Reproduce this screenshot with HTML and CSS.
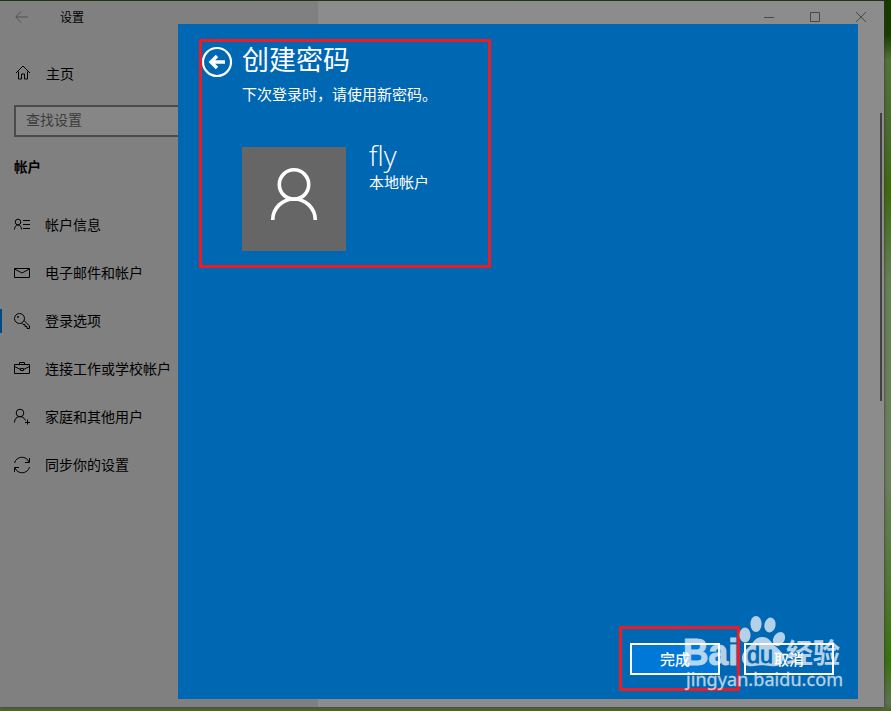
FILE: index.html
```html
<!DOCTYPE html>
<html lang="zh-CN">

<head>
    <meta charset="UTF-8">
    <title>设置</title>
    <link rel="stylesheet" href="styles.css">
</head>

<body>
    <div class="window">
        <div class="sidebar">
            <div class="title-bar">
                <svg class="back" width="14" height="12" viewBox="0 0 14 12"><path d="M6 .5.8 6 6 11.5M1 6h12"/></svg>
                <span>设置</span>
            </div>
            <div class="home">
                <svg width="16" height="16" viewBox="0 0 16 16"><path d="M1 8 8 1l7 7M3.500 6.500v7.500h3v-5h3v5h3V6.500"/></svg>
                <span>主页</span>
            </div>
            <div class="search">查找设置</div>
            <div class="group">帐户</div>
            <ul class="menu">
                <li>
                    <svg width="18" height="18" viewBox="0 0 18 18"><circle cx="5" cy="6" r="2.800"/><path d="M1.500 13.500c0-6 7-6 7 0M10 4.500h7M10 8.500h7M10 12.500h7"/></svg>
                    <span>帐户信息</span>
                </li>
                <li>
                    <svg width="18" height="18" viewBox="0 0 18 18"><path d="M1.500 4.500h15v9h-15zM1.500 5 9 9l7.500-4"/></svg>
                    <span>电子邮件和帐户</span>
                </li>
                <li class="active">
                    <svg width="18" height="18" viewBox="0 0 18 18"><circle cx="6.500" cy="6.500" r="5"/><circle cx="5" cy="5" r=".6"/><path d="m11 8.500 5.500 5.500v2.500H14v-2h-2v-2h-2L8.500 11"/></svg>
                    <span>登录选项</span>
                </li>
                <li>
                    <svg width="18" height="18" viewBox="0 0 18 18"><path d="M1.500 4.500h15v9h-15zM6.500 4.500v-2h5v2M1.500 6.500l6 3m3 0 6-3M7.500 8.500h3v2h-3z"/></svg>
                    <span>连接工作或学校帐户</span>
                </li>
                <li>
                    <svg width="18" height="18" viewBox="0 0 18 18"><circle cx="7" cy="5" r="3.800"/><path d="M1.500 14.500c0-7.500 9-7.500 11-2M14.500 11.500v5M12 14.500h5"/></svg>
                    <span>家庭和其他用户</span>
                </li>
                <li>
                    <svg width="18" height="18" viewBox="0 0 18 18"><path d="M1.500 7C3.500-.5 13.500-.5 16 6M16.500 2v4.500H12M16.500 11C14.500 18.500 4.500 18.500 2 12M1.500 16v-4.500H6"/></svg>
                    <span>同步你的设置</span>
                </li>
            </ul>
        </div>
        <div class="content">
            <svg class="controls" width="104" height="12" viewBox="0 0 104 12"><path d="M1 6.500h10M47.500 1.500h9v9h-9zM93 1l10 10M103 1 93 11"/></svg>
            <div class="scrollbar"></div>
        </div>
    </div>

    <div class="dialog">
        <div class="header">
            <svg class="dialog-back" width="32" height="32" viewBox="0 0 32 32"><circle cx="16" cy="16" r="14"/><path d="M24 16H10M16 10l-6 6 6 6"/></svg>
            <div class="heading">
                <h1>创建密码</h1>
                <p>下次登录时，请使用新密码。</p>
            </div>
        </div>
        <div class="account">
            <div class="avatar">
                <svg width="104" height="104" viewBox="0 0 104 104"><circle cx="52" cy="37.500" r="14.700"/><path d="M30.700 73a21.300 21 0 0 1 42.600 0"/></svg>
            </div>
            <div class="user">
                <div class="name">fly</div>
                <div class="type">本地帐户</div>
            </div>
        </div>
        <div class="buttons">
            <div class="btn primary">完成</div>
            <div class="btn">取消</div>
        </div>
    </div>

    <!-- 标注框 -->
    <div class="mark mark-top"></div>
    <div class="mark mark-finish"></div>

    <!-- 水印 -->
    <svg class="watermark" width="170" height="85" viewBox="0 0 170 85">
        <ellipse cx="65" cy="25" rx="5.600" ry="7.500"/>
        <ellipse cx="76" cy="14" rx="5.600" ry="8"/>
        <ellipse cx="90" cy="15" rx="5.600" ry="7.500" transform="rotate(12 90 15)"/>
        <ellipse cx="99" cy="29" rx="5.600" ry="7.500" transform="rotate(30 99 29)"/>
        <path d="M82 27c7 0 9 5 13 9 5 4 9 8 8 14-1 6-8 7-13 6-6-1-10-1-16 0-6 1-12-1-12-8 0-6 5-9 9-13 3-4 5-8 11-8z"/>
        <text class="du" x="67" y="53" textLength="26" lengthAdjust="spacingAndGlyphs">du</text>
        <text class="brand" x="3" y="55" textLength="55" lengthAdjust="spacingAndGlyphs">Bai</text>
        <text class="brand-cn" x="106" y="53" textLength="54">经验</text>
        <text class="site" x="6" y="76" textLength="157">jingyan.baidu.com</text>
    </svg>
</body>

</html>
```

FILE: styles.css
```css
* {
    margin: 0;
    padding: 0;
    box-sizing: border-box;
}

body {
    position: relative;
    width: 891px;
    height: 711px;
    padding-top: 1px;
    overflow: hidden;
    font-family: "Noto Sans", "Noto Sans CJK SC", sans-serif;
    font-size: 14px;
    color: #000;
    background: linear-gradient(#183800 0, #183c02 35px, #53733b 60px, #4b6b33 130px, #3f6810 190px, #668056 280px, #6c805f 480px, #4f7530 600px, #38720d 660px, #607255 703px, #4e642e 711px);
}

svg {
    fill: none;
    stroke: #000;
    stroke-width: 1;
    flex-shrink: 0;
}

.window {
    display: flex;
    width: 884px;
    height: 706px;
    background-color: #8c8c8c;
    box-shadow: 0 0 3px #333;
}

.sidebar {
    width: 318px;
    background-color: #808080;
}

.title-bar {
    display: flex;
    align-items: center;
    height: 32px;
    padding-left: 15px;
    font-size: 12px;
}

.title-bar span {
    margin-left: 31px;
}

.back {
    stroke: #505050;
}

.home {
    display: flex;
    align-items: center;
    height: 48px;
    margin-top: 16px;
    padding-left: 15px;
}

.home span {
    margin-left: 15px;
}

.search {
    width: 290px;
    height: 32px;
    margin: 8px 0 0 14px;
    padding-left: 10px;
    line-height: 26px;
    border: 2px solid #4b4b4b;
    background-color: #868686;
    color: #3c3c3c;
}

.group {
    margin: 20px 0 0 14px;
    font-size: 13.5px;
    line-height: 20px;
    font-weight: bold;
}

.menu {
    margin-top: 24px;
    list-style: none;
}

.menu li {
    display: flex;
    align-items: center;
    height: 48px;
    padding-left: 13px;
}

.menu span {
    margin-left: 14px;
    padding-bottom: 2px;
}

.menu .active {
    background: linear-gradient(#004a85, #004a85) 0 50% / 2px 24px no-repeat;
}

.content {
    flex: 1;
    display: flex;
    flex-direction: column;
    align-items: flex-end;
}

.controls {
    margin: 10px 17px 0 0;
    stroke: #484848;
}

.scrollbar {
    width: 2px;
    height: 288px;
    margin: 90px 2px 0 0;
    background-color: #404040;
}

/* 对话框盖在设置窗口上面 */
.dialog {
    position: absolute;
    left: 178px;
    top: 24px;
    display: flex;
    flex-direction: column;
    width: 680px;
    height: 675px;
    padding: 18px 24px 24px 23px;
    background-color: #0067b3;
    color: #fff;
}

.header {
    display: flex;
}

.dialog-back {
    margin-top: 4px;
    stroke: #fff;
    stroke-width: 2.2;
}

.dialog-back path {
    stroke-width: 3.4;
}

.heading {
    margin-left: 9px;
}

.heading h1 {
    font-size: 27px;
    font-weight: normal;
    line-height: 36px;
}

.heading p {
    margin-top: 5px;
    font-size: 15px;
    line-height: 22px;
}

.account {
    display: flex;
    margin: 42px 0 0 41px;
}

.avatar {
    width: 104px;
    height: 104px;
    background-color: #666;
}

.avatar svg {
    display: block;
    stroke: #fff;
    stroke-width: 3.6;
}

.user {
    margin-left: 23px;
}

.name {
    margin-top: -9px;
    font-family: "Open Sans", "Noto Sans", sans-serif;
    font-size: 28px;
    font-weight: 300;
    line-height: 34px;
}

.type {
    font-size: 15px;
    line-height: 20px;
}

.buttons {
    display: flex;
    justify-content: flex-end;
    gap: 24px;
    margin-top: auto;
}

.btn {
    width: 90px;
    height: 32px;
    border: 2px solid #fff;
    font-size: 15px;
    font-weight: 500;
    line-height: 28px;
    text-align: center;
}

.primary {
    background-color: #0078d7;
}

.mark {
    position: absolute;
    border: 3px solid #ed1c24;
}

.mark-top {
    left: 199px;
    top: 39px;
    width: 292px;
    height: 229px;
}

.mark-finish {
    left: 619px;
    top: 626px;
    width: 121px;
    height: 65px;
}

.watermark {
    position: absolute;
    left: 680px;
    top: 610px;
    fill: #fff;
    stroke: none;
    opacity: .7;
}

.du {
    font: 24px "Liberation Sans", sans-serif;
    fill: #0067b3;
    stroke: #0067b3;
    stroke-width: .8;
}

.brand {
    font: bold 36px "Liberation Sans", sans-serif;
    stroke: #fff;
}

.brand-cn {
    font: bold 27px "Noto Sans CJK SC", sans-serif;
}

.site {
    font: 18px "Noto Sans", sans-serif;
    stroke: #fff;
    stroke-width: .3;
}
```
